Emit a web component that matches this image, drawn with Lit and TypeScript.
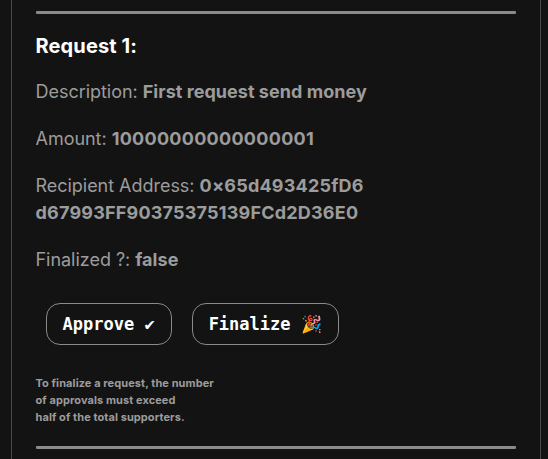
import { LitElement, html, css } from "lit";

interface SpendRequest {
  id: number;
  description: string;
  amount: string;
  recipient: string[];
  finalized: boolean;
}

class AppRoot extends LitElement {
  static properties = { request: { state: true } };

  declare request: SpendRequest;

  constructor() {
    super();
    this.request = {
      id: 1,
      description: "First request send money",
      amount: "10000000000000001",
      recipient: ["0×65d493425fD6", "d67993FF90375375139FCd2D36E0"],
      finalized: false,
    };
  }

  static styles = css`
    :host {
      display: block;
      height: 459px;
      overflow: hidden;
      background: #131313;
      color: #9c9c9c;
      font-family: Inter, sans-serif;
    }
    .panel {
      box-sizing: border-box;
      width: 530px;
      height: 459px;
      margin-left: 11px;
      padding: 11px 24px 0 23.5px;
      border: solid #4a4a4a;
      border-width: 0 1px;
    }
    .rule {
      height: 3px;
      margin-left: 0.5px;
      border-radius: 1px;
      background: #8a8a8a;
    }
    h3 {
      margin: 18px 0;
      font-size: 20px;
      line-height: 28px;
      font-weight: 700;
      letter-spacing: 0.13px;
      color: #ffffff;
    }
    p {
      margin: 0 0 20px;
      font-size: 18px;
      line-height: 27px;
      font-weight: 400;
      letter-spacing: -0.03px;
    }
    b {
      font-weight: 700;
      letter-spacing: 0.04px;
    }
    .digits {
      letter-spacing: 0.28px;
    }
    .address {
      letter-spacing: 0.2px;
    }
    .actions {
      display: flex;
      gap: 20px;
      padding: 10px 10px 30px 10.5px;
    }
    button {
      box-sizing: border-box;
      height: 42px;
      padding: 0 16px 0 15.5px;
      border: 1px solid #8a8a8a;
      border-radius: 14px;
      background: transparent;
      color: #ffffff;
      font: 700 17px "DejaVu Sans Mono", monospace;
      white-space: pre;
    }
    button:last-child {
      padding-left: 16px;
    }
    .note {
      margin: 0 0 20px;
      font-size: 11px;
      line-height: 17px;
      font-weight: 700;
      letter-spacing: 0.08px;
    }
  `;

  render() {
    const r = this.request;
    return html`
      <section class="panel">
        <div class="rule"></div>
        <h3>Request ${r.id}:</h3>
        <p>Description: <b>${r.description}</b></p>
        <p>Amount: <b class="digits">${r.amount}</b></p>
        <p>Recipient Address: <b class="address">${r.recipient[0]}<br />${r.recipient[1]}</b></p>
        <p>Finalized ?: <b>${String(r.finalized)}</b></p>
        <div class="actions">
          <button>Approve ✔</button>
          <button>Finalize 🎉</button>
        </div>
        <div class="note">
          To finalize a request, the number<br />of approvals must exceed<br />half of the total supporters.
        </div>
        <div class="rule"></div>
      </section>
    `;
  }
}

customElements.define("app-root", AppRoot);
